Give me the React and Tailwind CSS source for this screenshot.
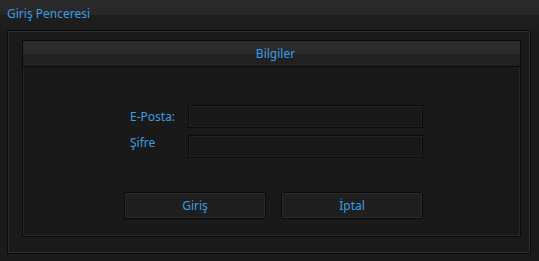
export default function App() {
  return (
    <div
      className="flex h-[261px] w-[539px] flex-col bg-[#1b1b1b] text-[#3a9ee2]"
      style={{ fontFamily: '"Noto Sans", "Open Sans", sans-serif' }}
    >
      <div className="flex h-[30px] shrink-0 flex-col bg-[linear-gradient(#2b2b2b_0%,#272727_50%,#1e1e1e_50%,#1c1c1c_100%)] px-[7px]">
        <span className="mt-[6px] text-[12px] leading-[16px]">Giriş Penceresi</span>
      </div>

      <div className="ml-[7px] mr-[8px] flex h-[224px] flex-col border border-[#0b0b0b] bg-[#1a1a1a] pb-[16px] pl-[14px] pr-[9px] pt-[9px] shadow-[inset_0_0_0_1px_#2c2c2c]">
        <div className="flex flex-1 flex-col border border-[#0a0a0a] bg-[#191919] shadow-[inset_0_0_0_1px_#262626]">
          <div className="flex h-[26px] items-center justify-center border-b border-[#0b0b0b] bg-[linear-gradient(#2e2e2e_0%,#2a2a2a_50%,#222222_55%,#202020_100%)] pl-[8px] text-[12px]">
            Bilgiler
          </div>

          <div className="ml-[107px] mt-[38px] grid grid-cols-[58px_235px] gap-y-[7px] text-[12px]">
            <span className="flex items-center">E-Posta:</span>
            <div className="h-[23px] border border-[#0a0a0a] bg-[#181818] shadow-[inset_0_0_0_1px_#222]" />
            <span className="leading-[16px]">Şifre</span>
            <div className="h-[23px] border border-[#0a0a0a] bg-[#181818] shadow-[inset_0_0_0_1px_#222]" />
          </div>

          <div className="ml-[101px] mt-[34px] flex gap-[15px] text-[12px]">
            <button className="flex h-[27px] w-[142px] items-center justify-center rounded-[2px] border border-[#0a0a0a] bg-[#1f1f1f] shadow-[inset_0_0_0_1px_#2a2a2a]">
              Giriş
            </button>
            <button className="flex h-[27px] w-[142px] items-center justify-center rounded-[2px] border border-[#0a0a0a] bg-[#1f1f1f] shadow-[inset_0_0_0_1px_#2a2a2a]">
              İptal
            </button>
          </div>
        </div>
      </div>
    </div>
  )
}
